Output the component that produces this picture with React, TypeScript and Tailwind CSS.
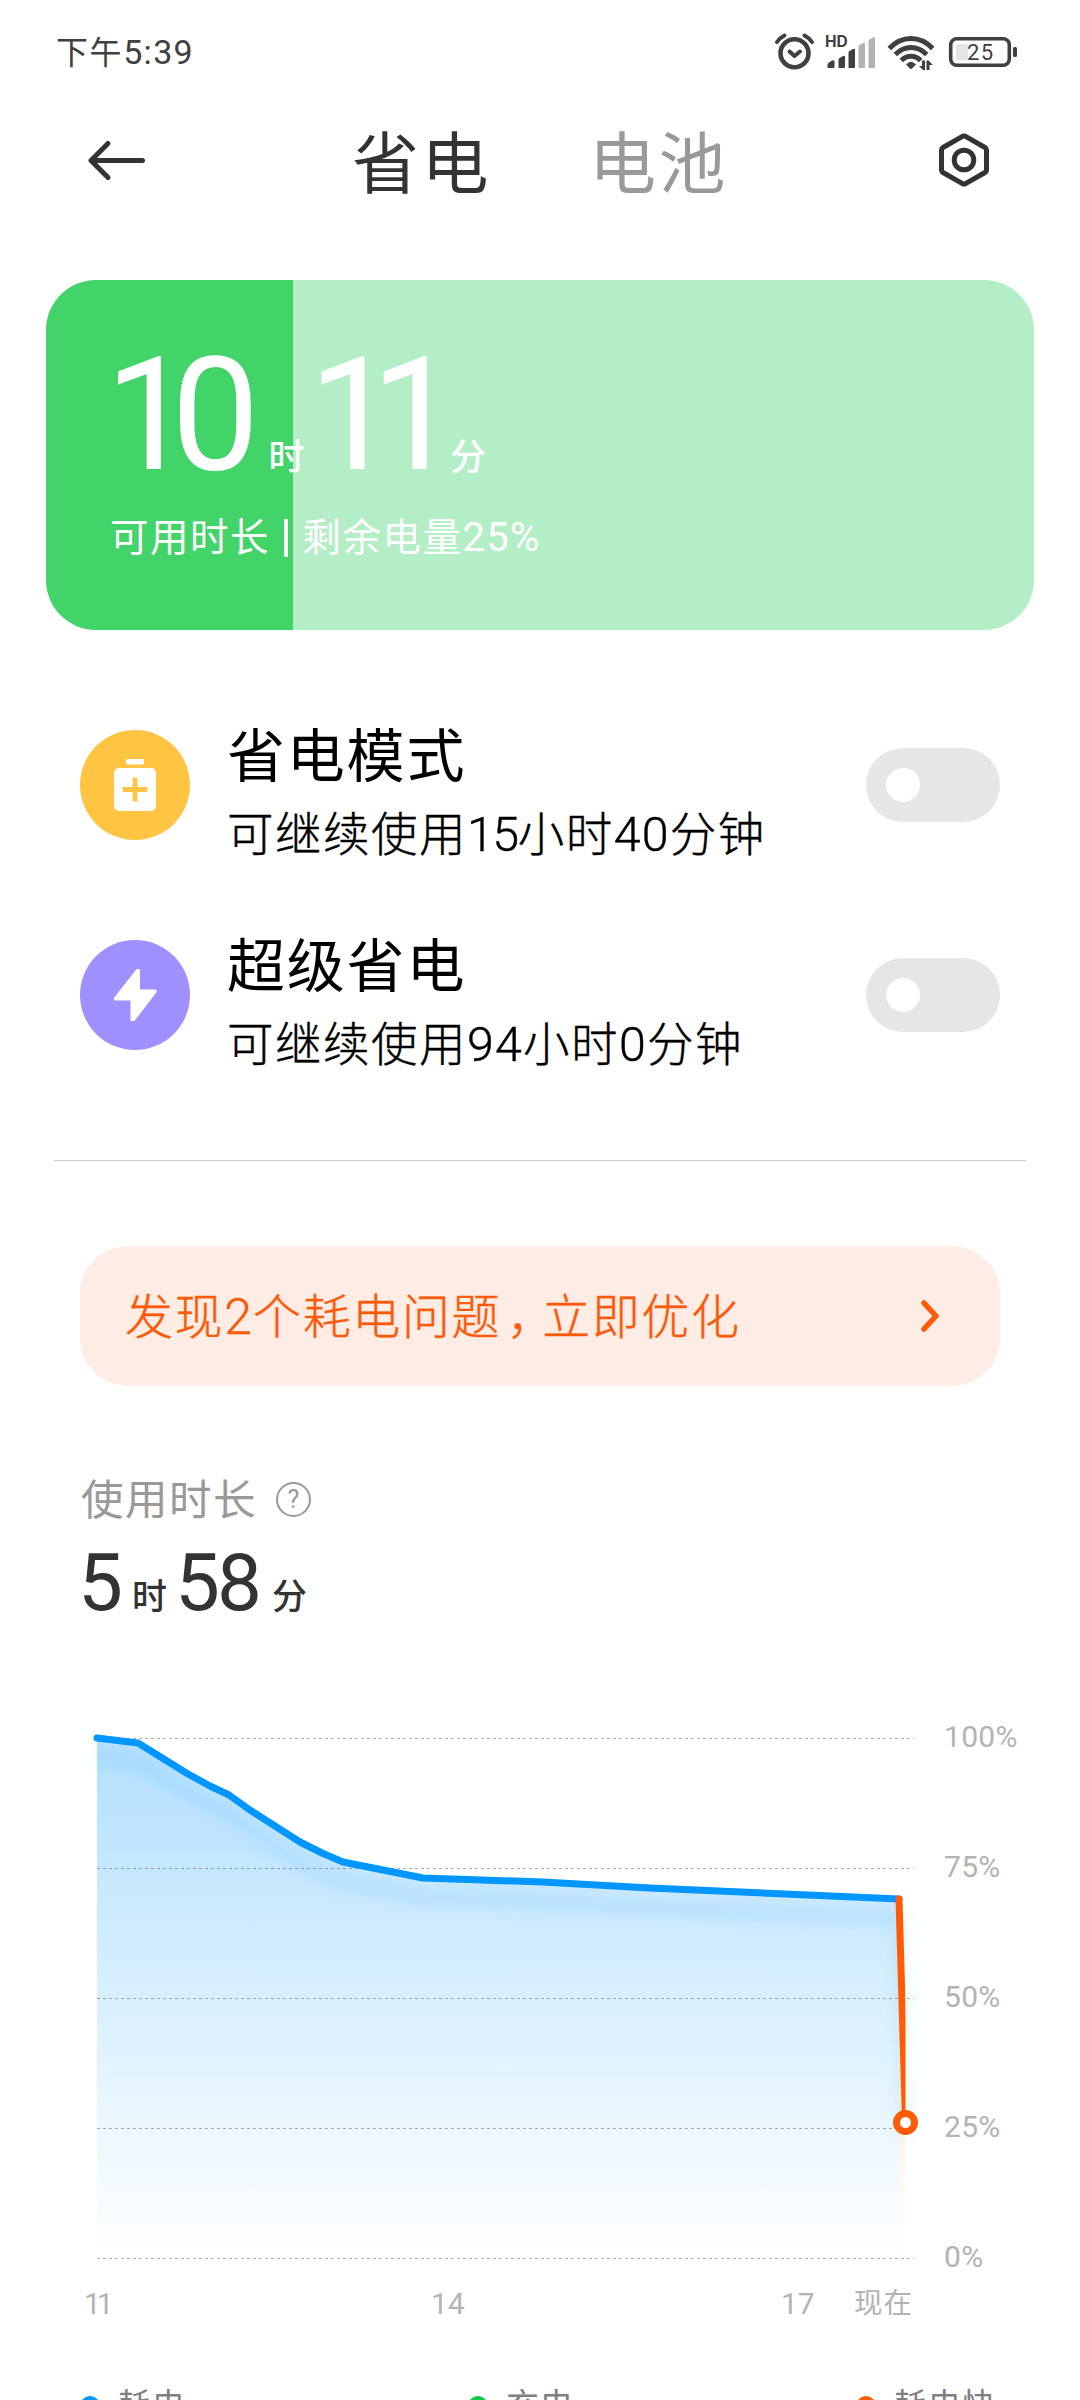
import React, { useState } from 'react';
import clsx from 'clsx';

const GRID = [0, 130, 260, 390, 520];
const LEVELS = ['100%', '75%', '50%', '25%', '0%'];

// Battery level samples, in chart pixels (0,0 is 100% at the first hour)
const SAMPLES = [
  [0, 0],
  [41, 5],
  [91, 36],
  [113, 48],
  [132, 57],
  [153, 72],
  [203, 104],
  [225, 115],
  [246, 124],
  [326, 140],
  [446, 144],
  [553, 150],
  [802, 161],
];
const LINE = SAMPLES.map(([x, y]) => `${x},${y}`).join(' ');

const LEGEND = [
  { label: '耗电', dot: 'bg-[#0c96ff]', width: 'w-[388px]' },
  { label: '充电', dot: 'bg-[#0fc94b]', width: 'w-[388px]' },
  { label: '耗电快', dot: 'bg-[#ff5a05]', width: 'w-[150px]' },
];

// Digits sit slightly larger than the Chinese glyphs around them
const Num = ({ children, tight }: { children: React.ReactNode; tight?: boolean }) => (
  <span className={clsx('text-[1.04em]', tight ? 'tracking-[-1.5px]' : 'tracking-[1.2px]')}>{children}</span>
);

function StatusBar() {
  return (
    <div className="flex h-[106px] justify-between pl-[56px] pr-[62px] text-[#404040]">
      <div className="pt-[35px] text-[32px] leading-[34px] tracking-[1.6px]">
        下午<span className="text-[34px] tracking-[1.3px]">5:39</span>
      </div>
      <div className="relative h-[76px] w-[244px]">
        <svg viewBox="774 0 244 76" className="h-[76px] w-[244px]" fill="none">
          <g stroke="#404040" strokeLinecap="round" strokeLinejoin="round">
            <circle cx="794.5" cy="53.2" r="14" strokeWidth="4.6" />
            <path d="M789.5 51.5l5 4.5 5.500-4.500" strokeWidth="4" />
            <path d="M777 42c2-3 4.500-5 7.500-6.500M812 42c-2-3-4.500-5-7.500-6.500" strokeWidth="4" />
          </g>
          <g fill="#404040">
            <path d="M827.500 68v-3q0-1.500 1.500-2.500l3-2q2.500-1 2.500 1V67q0 1-1 1z" />
            <path d="M838.500 68v-8q0-1.500 1-2l3.500-2q2-1 2 1V67q0 1-1 1z" />
            <path d="M848.500 68V53q0-1.500 1-2l3.500-2q2-1 2 1V67q0 1-1 1z" />
          </g>
          <g fill="#b3b3b3">
            <path d="M858.500 68V47q0-1.500 1-2l3.500-2q2-1 2 1V67q0 1-1 1z" />
            <path d="M868.500 68V41.500q0-1.500 1-2l3.500-2q2-1 2 1V67q0 1-1 1z" />
          </g>
          <g stroke="#404040" strokeWidth="5">
            <path d="M889.300 48.500q9.500-10 21.700-10t21.700 10" />
            <path d="M895.300 54.500q7-7 15.700-7t15.700 7" />
            <path d="M901.300 60.500q4.200-4.200 9.700-4.200t9.700 4.200" />
          </g>
          <path d="M906 64.500q5-5.500 10 0l-3.600 3.800q-1.400 1.200-2.800 0z" fill="#404040" />
          <path d="M919 66h3v-5.500h3V70h-2zM926.500 70v-9.500h2l4.500 4.500h-3.500v5z" fill="#404040" />
          <rect x="950.700" y="38.700" width="58.600" height="26.600" rx="6" stroke="#404040" strokeWidth="3.600" />
          <rect x="956" y="44" width="12" height="16.500" rx="2" fill="#e5e5e5" />
          <rect x="1013" y="47" width="4" height="10" rx="1.500" fill="#404040" />
        </svg>
        <span className="absolute left-[51px] top-[35px] font-[Inter] text-[15.5px] font-bold leading-[14px]">HD</span>
        <span className="absolute left-[193px] top-[42px] text-[22px] leading-[22px] tracking-[1.500px]">25</span>
      </div>
    </div>
  );
}

function Header({ tab, onTab }: { tab: number; onTab: (i: number) => void }) {
  return (
    <header className="flex h-[108px] items-center pl-[86px] pr-[89px]">
      <button aria-label="返回">
        <svg viewBox="0 0 62 48" className="h-[48px] w-[62px]" fill="none" stroke="#333" strokeWidth="5" strokeLinecap="round" strokeLinejoin="round">
          <path d="M56.500 24.500H5M22 7.500l-17 17 17 17" />
        </svg>
      </button>
      <nav className="ml-[204px] flex flex-1 gap-[98px] pt-[9px]">
        {['省电', '电池'].map((name, i) => (
          <button
            key={name}
            onClick={() => onTab(i)}
            className={clsx('text-[67px] leading-[70px] tracking-[2.5px]', tab === i ? 'text-[#333333]' : 'text-[#999999]')}
          >
            {name}
          </button>
        ))}
      </nav>
      <button aria-label="设置">
        <svg viewBox="0 0 54 58" className="h-[58px] w-[54px]" fill="none" stroke="#333" strokeWidth="5" strokeLinejoin="round">
          <path d="M25.500 5.300q1.500-.8 3 0L48 16.500q1.500.9 1.500 2.600v19.800q0 1.700-1.500 2.600L28.500 52.700q-1.500.8-3 0L6 41.500q-1.500-.9-1.500-2.600V19.100q0-1.700 1.500-2.600z" />
          <circle cx="27" cy="29" r="9.800" />
        </svg>
      </button>
    </header>
  );
}

function RemainingCard() {
  return (
    <section className="mx-[46px] mt-[66px] h-[350px] overflow-hidden rounded-[50px] bg-[linear-gradient(to_right,#42d369_25%,#b4eec6_25%)] pl-[64px] text-white">
      <div className="flex h-[225px] items-end">
        <span className="-ml-[5px] text-[157px] leading-[180px] tracking-[-22px]">10</span>
        <span className="ml-[31px] pb-[29px] text-[36px] font-medium leading-[36px]">时</span>
        <span className="ml-[4px] text-[157px] leading-[180px] tracking-[-26px]">11</span>
        <span className="ml-[17px] pb-[29px] text-[36px] font-medium leading-[36px]">分</span>
      </div>
      <div className="mt-[11px] flex items-center text-[38.500px] leading-[44px] tracking-[1.500px]">
        可用时长
        <i className="ml-[14px] mr-[15px] h-[38px] w-[3.500px] bg-white" />
        剩余电量<Num>25%</Num>
      </div>
    </section>
  );
}

function Toggle({ label }: { label: string }) {
  const [on, setOn] = useState(false);
  return (
    <button
      role="switch"
      aria-label={label}
      aria-checked={on}
      onClick={() => setOn(!on)}
      className={clsx('flex h-[74px] w-[134px] items-center rounded-full px-[20px]', on ? 'justify-end bg-[#0c96ff]' : 'bg-[#e6e6e6]')}
    >
      <span className="size-[34px] rounded-full bg-white" />
    </button>
  );
}

type ModeRowProps = { icon: React.ReactNode; color: string; title: string; children: React.ReactNode };

function ModeRow({ icon, color, title, children }: ModeRowProps) {
  return (
    <div className="flex h-[210px] items-center">
      <div className={clsx('size-[110px] rounded-full', color)}>
        <svg viewBox="0 0 110 110" className="size-full">{icon}</svg>
      </div>
      <div className="ml-[37px] flex-1 pt-[24px] text-black">
        <div className="text-[58px] leading-[76px] tracking-[1.800px]">{title}</div>
        <div className="text-[46.500px] font-light leading-[80px] tracking-[1.500px] [-webkit-text-stroke:0.4px]">{children}</div>
      </div>
      <Toggle label={title} />
    </div>
  );
}

function UsageChart() {
  return (
    <div className="mt-[81px] text-[30px] text-[#b3b3b3]">
      <div className="flex">
        <svg viewBox="-17 -30 860 570" className="ml-[80px] h-[570px] w-[860px]" fill="none">
          <defs>
            <linearGradient id="drain" x1="0" y1="0" x2="0" y2="520" gradientUnits="userSpaceOnUse">
              <stop stopColor="#0096ff" stopOpacity="0.3" />
              <stop offset="1" stopColor="#0096ff" stopOpacity="0" />
            </linearGradient>
            <linearGradient id="fast" x1="0" y1="160" x2="0" y2="520" gradientUnits="userSpaceOnUse">
              <stop stopColor="#ff5a05" stopOpacity="0.2" />
              <stop offset="1" stopColor="#ff5a05" stopOpacity="0" />
            </linearGradient>
            <filter id="soft" filterUnits="userSpaceOnUse" x="-20" y="-30" width="860" height="570">
              <feGaussianBlur stdDeviation="7" />
            </filter>
            <clipPath id="now">
              <rect x="-20" y="-30" width="828.500" height="570" />
            </clipPath>
          </defs>
          <polygon points={`${LINE} 802,520 0,520`} fill="url(#drain)" />
          <polygon points="802,161 808,384 808,520 802,520" fill="url(#fast)" />
          {GRID.map((y) => (
            <line key={y} x1="0" x2="817" y1={y + 0.5} y2={y + 0.5} stroke="#000" strokeOpacity="0.32" strokeDasharray="3 3" />
          ))}
          <g filter="url(#soft)" transform="translate(0 20)" strokeWidth="12">
            <polyline points={LINE} stroke="#0096ff" strokeOpacity="0.12" />
            <path d="M802 161l5 215" stroke="#4cc8a0" strokeOpacity="0.16" />
          </g>
          <polyline points={LINE} stroke="#0096ff" strokeWidth="7" strokeLinecap="round" strokeLinejoin="round" />
          <path d="M802 161l6.500 223" stroke="#ff5a05" strokeWidth="7" strokeLinecap="round" clipPath="url(#now)" />
          <circle cx="808.500" cy="384.500" r="9" fill="#fff" stroke="#ff5a05" strokeWidth="7" />
        </svg>
        <div className="ml-[4px] flex h-[570px] flex-col gap-[100px] pt-[14px] leading-[30px] tracking-[0.3px]">
          {LEVELS.map((level) => (
            <span key={level}>{level}</span>
          ))}
        </div>
      </div>
      <div className="flex pl-[84px] pt-[9px] leading-[34px]">
        <span className="w-[347px] tracking-[-4px]">11</span>
        <span className="w-[350px]">14</span>
        <span className="w-[73px]">17</span>
        <span className="text-[28.500px] tracking-[1px]">现在</span>
      </div>
    </div>
  );
}

export default function App() {
  const [tab, setTab] = useState(0);

  return (
    <div className="h-[2400px] w-[1080px] overflow-hidden whitespace-nowrap bg-white font-[Roboto,'Noto_Sans_CJK_SC',sans-serif]">
      <StatusBar />
      <Header tab={tab} onTab={setTab} />
      <RemainingCard />

      <section className="mt-[50px] px-[80px]">
        <ModeRow
          title="省电模式"
          color="bg-[#ffc542]"
          icon={
            <>
              <rect x="46" y="29" width="18" height="5.500" rx="1.500" fill="#fff" />
              <rect x="34" y="38" width="42" height="43" rx="5" fill="#fff" />
              <path d="M55 50v19M45 59.500h20" stroke="#ffc542" strokeWidth="4.800" strokeLinecap="square" />
            </>
          }
        >
          可继续使用<Num tight>15</Num>小时<Num>40</Num>分钟
        </ModeRow>
        <ModeRow
          title="超级省电"
          color="bg-[#9f90ff]"
          icon={<path d="M57 30L35 58v1.500h16.500V80h2.500L75.500 52v-1.500H59V30z" fill="#fff" stroke="#fff" strokeWidth="2" strokeLinejoin="round" />}
        >
          可继续使用<Num>94</Num>小时<Num>0</Num>分钟
        </ModeRow>
      </section>

      <hr className="mx-[54px] mt-[60px] border-[#cccccc]" />

      <button className="mx-[80px] mt-[85px] flex h-[140px] w-[920px] items-center justify-between rounded-[48px] bg-[#ffede5] pl-[45px] pr-[56px] text-[48px] font-light tracking-[1.600px] text-[#fa5a0a] [-webkit-text-stroke:0.4px]">
        <span className="pt-[3px]">
          发现<Num>2</Num>个耗电问题<span className="ml-[6px] tracking-[-13px]">，</span>立即优化
        </span>
        <svg viewBox="0 0 28 36" className="h-[36px] w-[28px]" fill="none" stroke="#ff5a05" strokeWidth="5.500" strokeLinecap="round" strokeLinejoin="round">
          <path d="M8 5l12 13L8 31" />
        </svg>
      </button>

      <section className="mt-[85px] pl-[80px]">
        <div className="flex h-[56px] items-center text-[42.500px] tracking-[1.500px] text-[#999999]">
          <span className="ml-[1px] pt-[4px]">使用时长</span>
          <span className="ml-[19px] flex size-[35px] items-center justify-center rounded-full border-[2.500px] text-[25px] leading-none tracking-normal">?</span>
        </div>
        <div className="flex h-[100px] items-end text-[#333333]">
          <span className="-ml-[2px] text-[80px] leading-[88px]">5</span>
          <span className="ml-[9px] pb-[11px] text-[35px] font-medium leading-[36px]">时</span>
          <span className="ml-[8px] text-[80px] leading-[88px] tracking-[-3px]">58</span>
          <span className="ml-[13px] pb-[11px] text-[35px] font-medium leading-[36px]">分</span>
        </div>
      </section>

      <UsageChart />

      <div className="mt-[65px] flex pl-[80px] text-[33px] leading-[40px] tracking-[1px] text-[#808080]">
        {LEGEND.map(({ label, dot, width }) => (
          <div key={label} className={clsx('flex items-center gap-[18px]', width)}>
            <span className={clsx('size-[20px] rounded-full', dot)} />
            {label}
          </div>
        ))}
      </div>
    </div>
  );
}
